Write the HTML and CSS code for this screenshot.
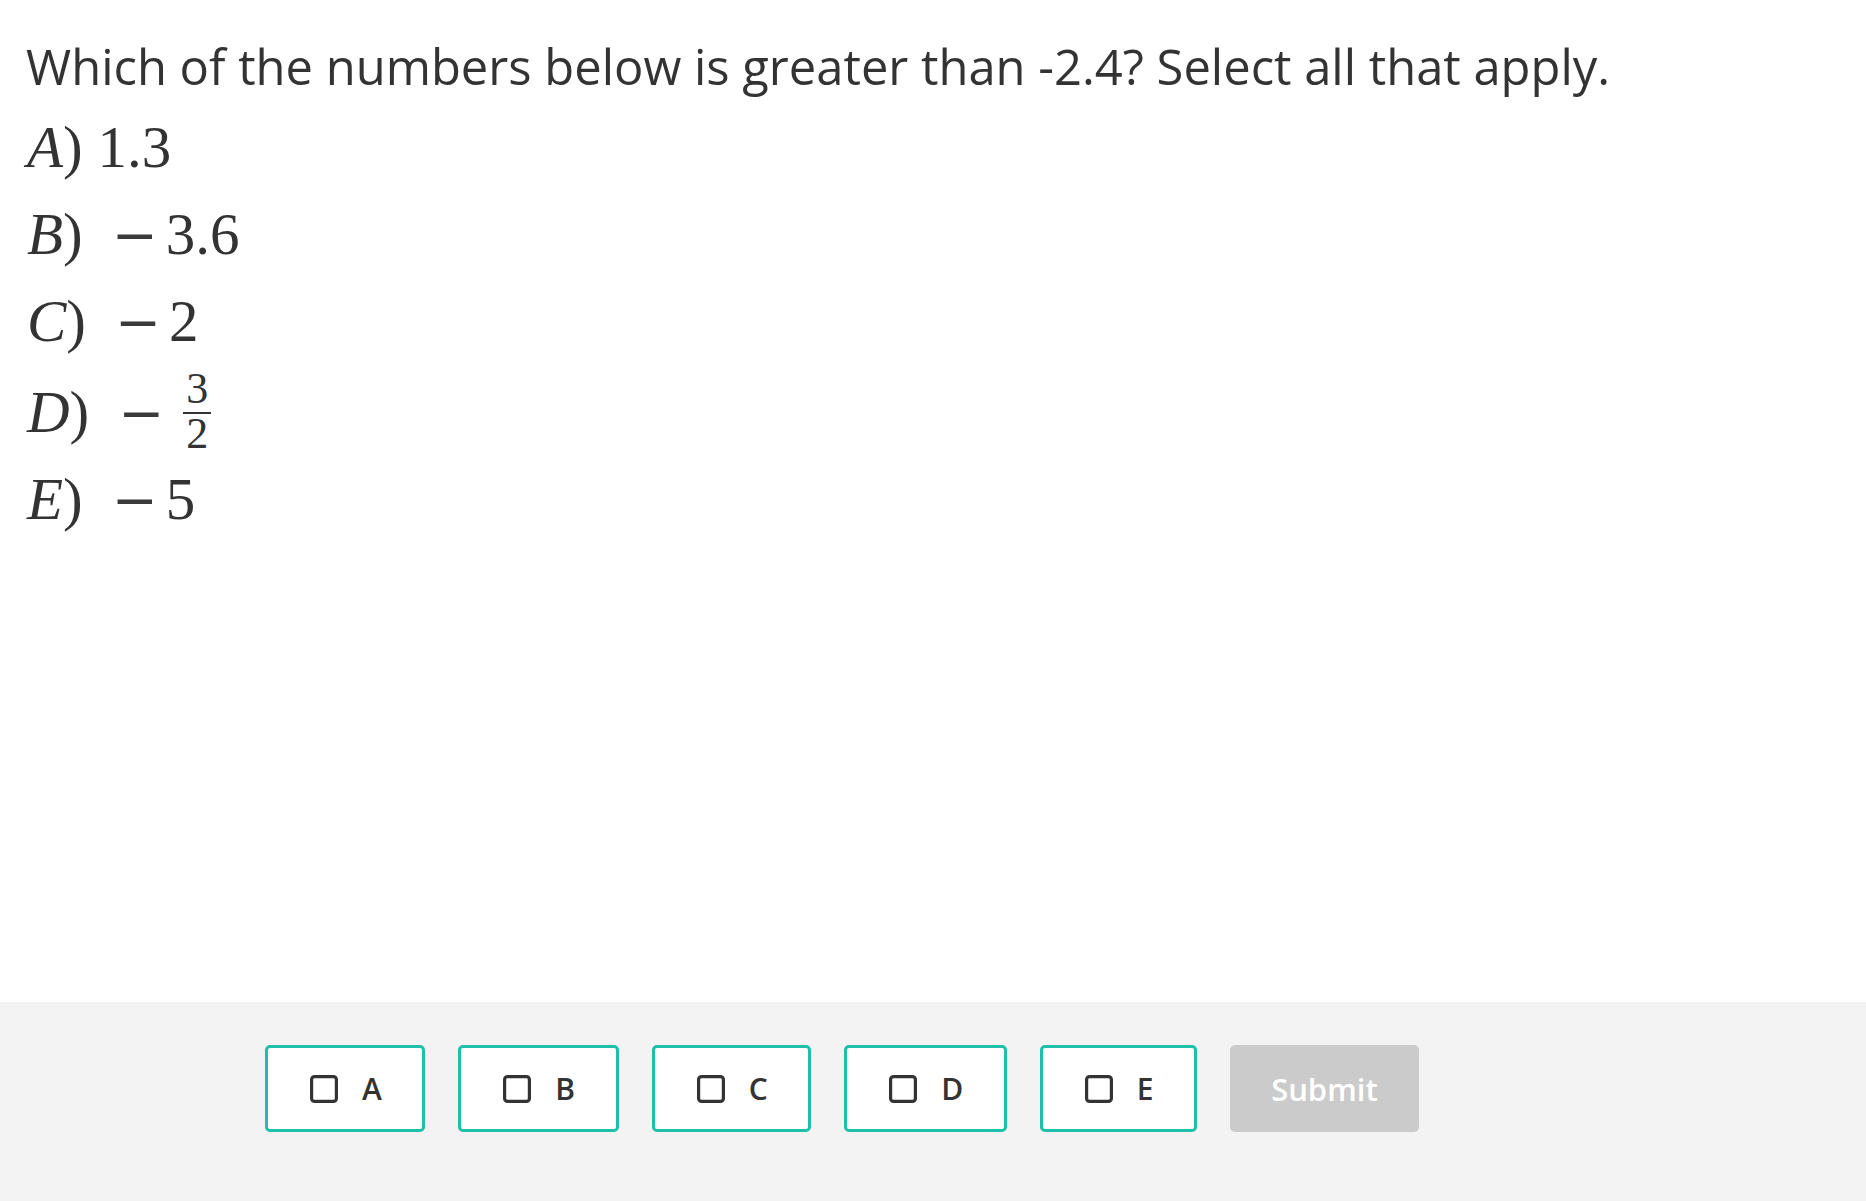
FILE: index.html
```html
<!DOCTYPE html>
<html lang="en">
<head>
<meta charset="utf-8">
<title>Question</title>
<link rel="stylesheet" href="styles.css">
</head>
<body>
<div class="page">
  <main class="content">
    <p class="question">Which of the numbers below is greater than -2.4? Select all that apply.</p>
    <div class="choices">
      <div class="choice"><span class="lbl"><i>A</i>)</span> <span class="num">1.3</span></div>
      <div class="choice"><span class="lbl"><i>B</i>)</span><span class="minus">−</span><span class="val">3.6</span></div>
      <div class="choice"><span class="lbl"><i>C</i>)</span><span class="minus">−</span><span class="val">2</span></div>
      <div class="choice choice-frac"><span class="lbl"><i>D</i>)</span><span class="minus">−</span><span class="frac"><span class="frac-num">3</span><span class="frac-den">2</span></span></div>
      <div class="choice"><span class="lbl"><i>E</i>)</span><span class="minus">−</span><span class="val">5</span></div>
    </div>
  </main>
  <footer class="footer">
    <button class="opt" type="button"><svg class="box" viewBox="0 0 28 28" width="28" height="28"><rect x="1.6" y="1.6" width="24.8" height="24.8" rx="3" fill="none" stroke="#333" stroke-width="3.2"/></svg><span class="opt-letter">A</span></button>
    <button class="opt" type="button"><svg class="box" viewBox="0 0 28 28" width="28" height="28"><rect x="1.6" y="1.6" width="24.8" height="24.8" rx="3" fill="none" stroke="#333" stroke-width="3.2"/></svg><span class="opt-letter">B</span></button>
    <button class="opt" type="button"><svg class="box" viewBox="0 0 28 28" width="28" height="28"><rect x="1.6" y="1.6" width="24.8" height="24.8" rx="3" fill="none" stroke="#333" stroke-width="3.2"/></svg><span class="opt-letter">C</span></button>
    <button class="opt" type="button"><svg class="box" viewBox="0 0 28 28" width="28" height="28"><rect x="1.6" y="1.6" width="24.8" height="24.8" rx="3" fill="none" stroke="#333" stroke-width="3.2"/></svg><span class="opt-letter">D</span></button>
    <button class="opt" type="button"><svg class="box" viewBox="0 0 28 28" width="28" height="28"><rect x="1.6" y="1.6" width="24.8" height="24.8" rx="3" fill="none" stroke="#333" stroke-width="3.2"/></svg><span class="opt-letter">E</span></button>
    <button class="submit" type="button">Submit</button>
  </footer>
</div>
</body>
</html>
```
FILE: styles.css
```css
* { box-sizing: border-box; }
html, body { margin: 0; padding: 0; background: #fff; }
body { font-family: "Open Sans", "Liberation Sans", sans-serif; color: #333; }

.page { min-height: 100vh; display: flex; flex-direction: column; }
.content { flex: 1; padding: 34px 26px 0; }

.question {
  margin: 0;
  font-size: 48.9px;
  line-height: 64px;
  font-weight: 400;
  color: #333;
}

.choices {
  margin-top: 6px;
  padding-left: 1px;
  font-family: "Liberation Serif", "Times New Roman", serif;
  font-size: 59px;
  color: #333;
}
.choice { line-height: 87px; height: 87px; white-space: nowrap; }
.choice i { font-style: italic; }
.minus {
  display: inline-block;
  width: 43px;
  margin-left: 29px;
  text-align: center;
  font-family: "DejaVu Serif", "Liberation Serif", serif;
  font-size: 55px;
  line-height: 1;
  color: #3a3a3a;
}
.val { margin-left: 11px; }

.choice-frac { height: 91px; padding-top: 4px; }
.frac {
  display: inline-flex;
  flex-direction: column;
  align-items: stretch;
  vertical-align: 29px;
  margin-left: 22px;
  font-size: 44px;
  line-height: 30px;
  text-align: center;
}
.frac-num { padding: 0 3px 8px; border-bottom: 2px solid #333; }
.frac-den { padding: 5px 3px 0; }

.footer {
  height: 199px;
  background: #f3f3f3;
  display: flex;
  align-items: flex-start;
  gap: 33px;
  padding: 43px 0 0 265px;
}
.opt {
  height: 87px;
  display: inline-flex;
  align-items: center;
  gap: 24px;
  padding: 0 40.5px 0 42px;
  background: #fff;
  border: 3px solid #1fc0a9;
  border-radius: 5px;
  font-family: "Open Sans", sans-serif;
  font-weight: 600;
  font-size: 30px;
  color: #333;
  cursor: pointer;
}
.box { display: block; flex: none; }
.opt-letter { line-height: 1; }
.submit {
  width: 189px;
  height: 87px;
  border: 0;
  border-radius: 5px;
  background: #cbcbcb;
  color: #fff;
  font-family: "Open Sans", sans-serif;
  font-weight: 600;
  font-size: 31px;
  padding: 0;
}
```
